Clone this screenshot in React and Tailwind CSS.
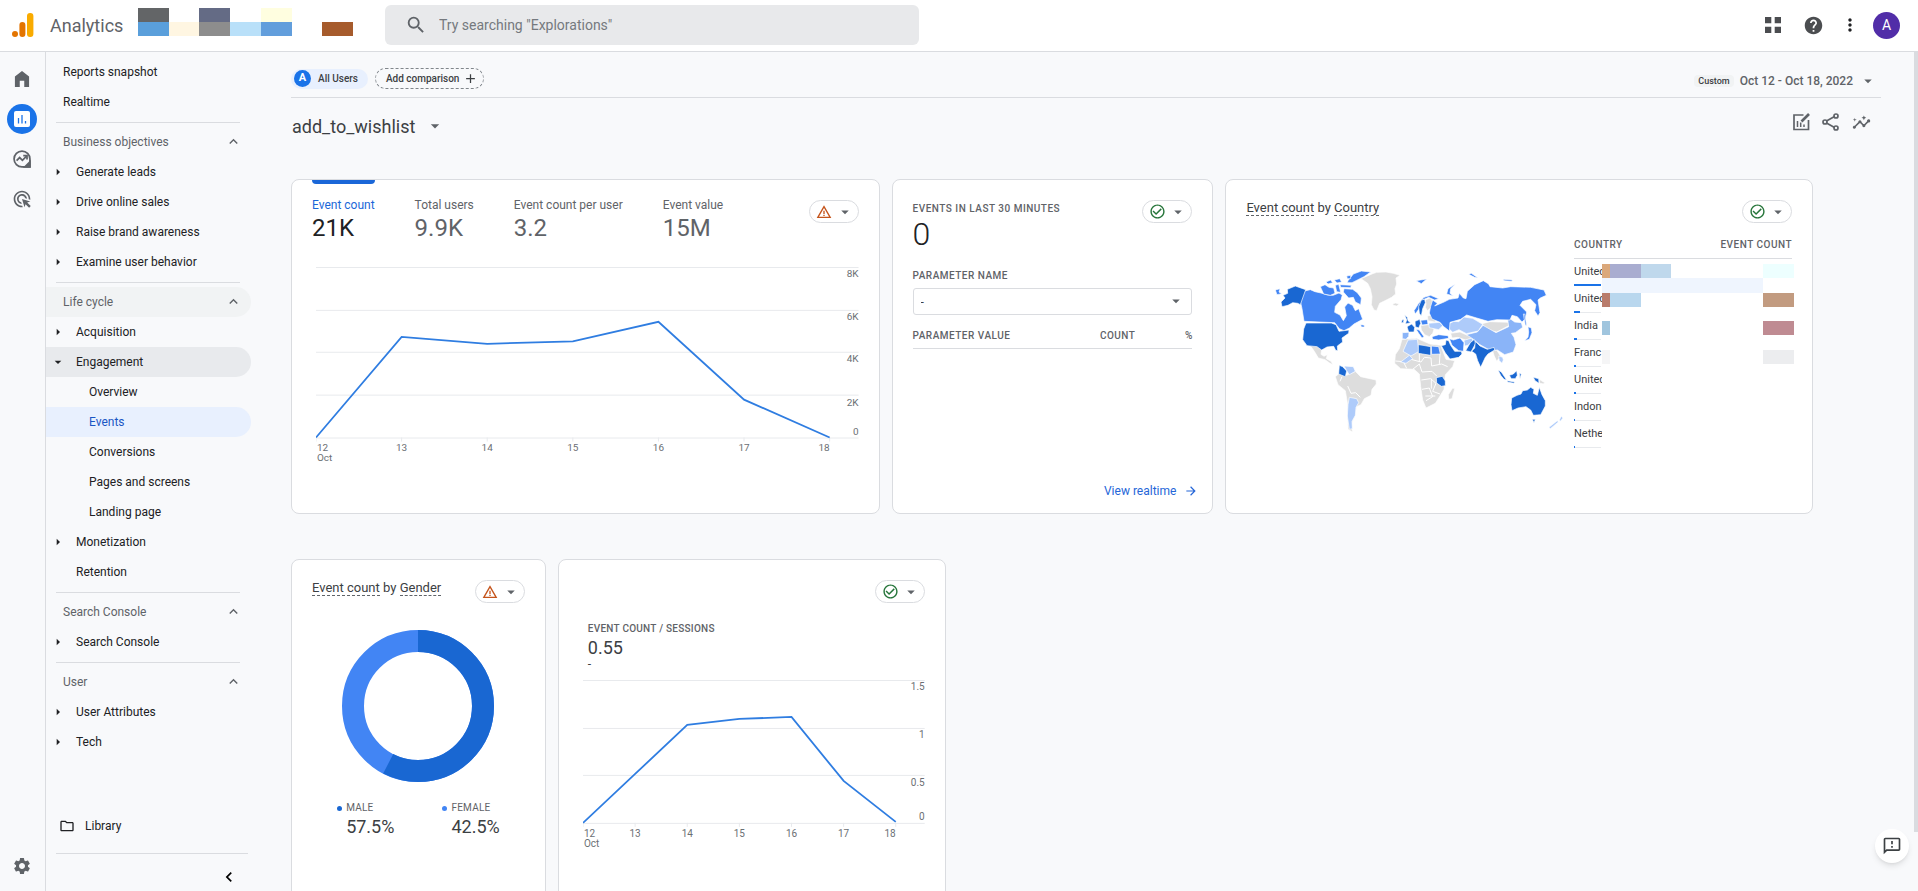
import React from 'react';
import {
  MdAdd,
  MdAdsClick,
  MdArrowDropDown,
  MdArrowForward,
  MdArrowRight,
  MdCheckCircleOutline,
  MdChevronLeft,
  MdExpandLess,
  MdHelp,
  MdInsights,
  MdMoreVert,
  MdOutlineFeedback,
  MdOutlineFolder,
  MdSearch,
  MdSettings,
  MdShare,
  MdWarningAmber,
} from 'react-icons/md';

const navSections = [
  {
    items: [
      { label: 'Reports snapshot', level: 0 },
      { label: 'Realtime', level: 0 },
    ],
  },
  {
    title: 'Business objectives',
    items: [
      { label: 'Generate leads', level: 1, arrow: 'right' },
      { label: 'Drive online sales', level: 1, arrow: 'right' },
      { label: 'Raise brand awareness', level: 1, arrow: 'right' },
      { label: 'Examine user behavior', level: 1, arrow: 'right' },
    ],
  },
  {
    title: 'Life cycle',
    highlighted: true,
    items: [
      { label: 'Acquisition', level: 1, arrow: 'right' },
      { label: 'Engagement', level: 1, arrow: 'down' },
      { label: 'Overview', level: 2 },
      { label: 'Events', level: 2, active: true },
      { label: 'Conversions', level: 2 },
      { label: 'Pages and screens', level: 2 },
      { label: 'Landing page', level: 2 },
      { label: 'Monetization', level: 1, arrow: 'right' },
      { label: 'Retention', level: 1 },
    ],
  },
  {
    title: 'Search Console',
    items: [{ label: 'Search Console', level: 1, arrow: 'right' }],
  },
  {
    title: 'User',
    items: [
      { label: 'User Attributes', level: 1, arrow: 'right' },
      { label: 'Tech', level: 1, arrow: 'right' },
    ],
  },
];

const metrics = [
  { label: 'Event count', value: '21K', active: true },
  { label: 'Total users', value: '9.9K' },
  { label: 'Event count per user', value: '3.2' },
  { label: 'Event value', value: '15M' },
];

const countries = [
  { name: 'United', bar: 'w-full' },
  { name: 'United', bar: 'w-[6px]' },
  { name: 'India', bar: 'w-[3px]' },
  { name: 'Franc', bar: 'w-[2px]' },
  { name: 'United', bar: 'w-[2px]' },
  { name: 'Indon', bar: 'w-px' },
  { name: 'Nethe', bar: 'w-px' },
];

// Redaction blocks shown next to the product name
const headerBlocks = [
  'bg-[#636567]', '', 'bg-[#646b85]', '', 'bg-[#fffee0]', '', '',
  'bg-[#5a9fdb]', 'bg-[#fff6e2]', 'bg-[#8d8d8d]', 'bg-[#b9e0f9]', 'bg-[#629edc]', '', 'bg-[#a65b2c]',
];

// Redaction blocks over the country table, one row per band
const tableBlocks = [
  { height: 'h-[14px]', cells: ['bg-[#dba87a]', 'bg-[#a9add0]', 'bg-[#bfd8ec]', '', 'bg-[#edffff]'] },
  { height: 'h-[15px]', cells: ['bg-[#eff5fe]', 'bg-[#eff5fe]', 'bg-[#eff5fe]', 'bg-[#eff5fe]', ''] },
  { height: 'h-[14px]', cells: ['bg-[#b97c6c]', 'bg-[#b9d7ee]', '', '', 'bg-[#c29b80]'] },
  { height: 'h-[14px]', cells: ['', '', '', '', ''] },
  { height: 'h-[14px]', cells: ['bg-[#a0c5de]', '', '', '', 'bg-[#bf8b92]'] },
  { height: 'h-[15px]', cells: ['', '', '', '', ''] },
  { height: 'h-[14px]', cells: ['bg-[#f5f5f6]', '', '', '', 'bg-[#ecedef]'] },
  { height: 'h-[76px]', cells: ['', '', '', '', ''] },
];

const levelPadding = ['pl-[17px]', 'pl-[30px]', 'pl-[43px]'];

const AnalyticsLogo = () => (
  <svg viewBox="0 0 22 25" className="h-[25px] w-[22px]" aria-hidden="true">
    <rect x="15" y="0" width="6.4" height="24" rx="3" fill="#f9ab00" />
    <rect x="7.4" y="9" width="6" height="15" rx="3" fill="#e37400" />
    <circle cx="3" cy="21" r="3" fill="#e37400" />
  </svg>
);

const HomeIcon = () => (
  <svg viewBox="0 0 24 24" className="size-5" fill="currentColor">
    <path d="M12 2.5 3.5 9v12.5H9.3V14h5.4v7.5h5.8V9z" />
  </svg>
);

const ReportsIcon = () => (
  <svg viewBox="0 0 16 16" className="size-4">
    <rect width="16" height="16" rx="2" fill="#fff" />
    <path d="M4.5 7v5.5M8 4v8.5M11.5 10v2.5" stroke="#1a73e8" strokeWidth="1.3" />
  </svg>
);

const ExploreIcon = () => (
  <svg viewBox="0 0 24 24" className="size-5" fill="none" stroke="currentColor" strokeWidth="2.1">
    <path d="M21.5 12A9.5 9.5 0 1 0 12 21.500M21.500 12V21.500H12" />
    <path d="M21.500 15.500V21.500H15.500z" fill="currentColor" />
    <path d="m5.500 14 3.700-3.700 3.300 3.300 5-5" />
    <path d="M13.500 8h4.500v4.500" />
  </svg>
);

const AppsIcon = () => (
  <svg viewBox="0 0 16 16" className="size-4" fill="currentColor">
    <path d="M0 0h6.300v6.300H0zM9.700 0H16v6.300H9.700zM0 9.700h6.300V16H0zM9.700 9.700H16V16H9.700z" />
  </svg>
);

const CustomizeIcon = () => (
  <svg viewBox="0 0 18 18" className="size-[18px]" fill="none" stroke="currentColor" strokeWidth="1.700">
    <path d="M11.500 2H2v14.500h14.500V7" />
    <path d="M5.500 8v6M8.700 9.500V14M12 11.500V14" strokeWidth="1.500" />
    <path d="m9.500 8.500 7.500-7.500" strokeWidth="2.600" />
  </svg>
);

const ShareIcon = () => (
  <svg viewBox="0 0 18 18" className="size-[18px]" fill="none" stroke="currentColor" strokeWidth="1.7">
    <path d="M4.500 8 12.500 3.500M4.500 10l8 4.500" />
    <circle cx="14" cy="3" r="2" />
    <circle cx="3" cy="9" r="2" />
    <circle cx="14" cy="15" r="2" />
  </svg>
);

const StatusPill = ({ warning }) => (
  <button
    type="button"
    aria-label={warning ? 'Data quality warning' : 'Data quality good'}
    className="flex h-[23px] w-[50px] shrink-0 items-center justify-between rounded-full border border-[#dadce0] bg-white pr-1 pl-[6px]"
  >
    {warning ? (
      <MdWarningAmber className="size-4 text-[#c5541b]" />
    ) : (
      <MdCheckCircleOutline className="size-[17px] text-[#26753a]" />
    )}
    <MdArrowDropDown className="size-[18px] text-[#5f6368]" />
  </button>
);

const Card = ({ className = '', children }) => (
  <section className={`flex flex-col rounded-lg border border-[#dadce0] bg-white px-5 pt-5 ${className}`}>
    {children}
  </section>
);

const CardTitle = ({ by }) => (
  <h2 className="text-[13px] leading-4 text-[#3c4043]">
    <span className="border-b border-dashed border-[#5f6368]">Event count</span> by{' '}
    <span className="border-b border-dashed border-[#5f6368]">{by}</span>
  </h2>
);

const LineChart = ({ width, height, plotWidth, points, grid, yLabels, label }) => {
  const base = grid[grid.length - 1];
  const step = plotWidth / 6;
  return (
    <svg viewBox={`0 0 ${width} ${height}`} className="block w-full" role="img" aria-label={label}>
      {grid.map((y) => (
        <line key={y} x1="0" x2={width} y1={y + 0.5} y2={y + 0.5} stroke="#e8eaed" />
      ))}
      {points.map((_, i) => (
        <line key={i} x1={i * step} x2={i * step} y1={base} y2={base + 4} stroke="#e8eaed" />
      ))}
      <polyline
        points={points.map((y, i) => `${i * step},${y}`).join(' ')}
        fill="none"
        stroke="#2f7de1"
        strokeWidth="1.8"
      />
      <g fontSize="10" fill="#6b6f74">
        {yLabels.map(({ text, y }) => (
          <text key={text} x={width} y={y} textAnchor="end">{text}</text>
        ))}
        <text x="1" y={base + 14}>12</text>
        <text x="1" y={base + 24}>Oct</text>
        {[13, 14, 15, 16, 17].map((day, i) => (
          <text key={day} x={(i + 1) * step} y={base + 14} textAnchor="middle">{day}</text>
        ))}
        <text x={plotWidth} y={base + 14} textAnchor="end">18</text>
      </g>
    </svg>
  );
};

const WorldMap = () => (
  <svg viewBox="0 0 912 510" className="w-[304px] shrink" role="img" aria-label="Event count by country map">
    <g transform="translate(-140 -290)" stroke="#fff" strokeWidth="2" strokeLinejoin="round">
      {/* No data */}
      <g fill="#dddddd">
        <path d="M425 328l35-15 12-4 28-1 22 4 20 6-12 8 2 18-5 14 2 16-12 10-16 8-20 10-9 22-8-2-8-16 2-24-5-24-8-16z" />
        <path d="M520 404l8-3 12 3-8 6-10-2z" />
        <path d="M270 525l28 2 9 14-2 14 9 6 10-5-3 12 14 8 6 10-10-5-14-10-20-5-12-20z" />
        <path d="M348 622l12-10 22 6 26-12 16 16 46 10 1 12-13 16-3 18-20 10-10 18-13 6-6 30-11 26 5 20-14-8-2-80-6-36-22-18z" />
        <path d="M548 510l44-3 40 17 32 4 16 42 26 4-6 18-22 24-4 44-12 20-14 22-28 14-10-24-6-40-4-38-16-14-40-2-18-16 2-26 12-18z" />
        <path d="M700 656l6 2-8 30-10 2-1-14z" />
        <path d="M618 392l14-6 8 10-4 18-12 10-6-10 2-10z" />
        <path d="M604 468l24-2 16 14-4 12-10 10-14-6-10-14z" />
        <path d="M624 440l20-4 12 12-10 10-20-4z" />
        <path d="M694 492l28-4 22 10 16-2 4 10-26 6-22-8-18 2z" />
        <path d="M788 463l24-6 56 2 4 8-40 21-30-7z" />
        <path d="M820 545l12-3 10 16 10 12-4 10-10-12-6 8-8-18z" />
        <path d="M960 630l16 10-4 4-12-3z" />
      </g>
      <path
        d="M575 570l30 8 10-14 20 2 2 24 30-6 18 8M580 600l20-16 8 24 30-2 14 14M606 632l28-4 16 14-10 24 22 8M608 660l22-4 10 26-20 12M528 575l24 2 10 20M600 552v26M662 554l-2 30M385 650l10 22 14-2 14 14M368 622l-6 14M618 680h30M636 628v30"
        fill="none"
        strokeWidth="3"
      />

      {/* Lowest range */}
      <g fill="#aecbfa">
        <path d="M374 590l28 2 6 14-18 10-8-12z" />
        <path d="M390 684l22 4 6 12-8 14-2 24-10 18 1 22-9 2-6-40 2-34z" />
        <path d="M566 512l28-2 5 36-24 14-24-14z" />
        <path d="M544 578l26-20 10 10-20 14z" />
        <path d="M684 465l20-9 14 1 16-14 26 4 30 18-13 20-36 8-22-12-19 8-12-12z" />
        <path d="M628 462l32-3 10 10-12 12-28-6z" />
        <path d="M734 513l24-7 2 8-14 14-10 2z" />
        <path d="M838 560l12 4 2 8-4 10-8-8z" />
        <path d="M1026 741l5 5-8 10-3-4zM1014 754l3 4-24 20-4-4z" />
      </g>

      {/* Low range */}
      <g fill="#8ab4f8">
        <path d="M741 496l33-8 17-20 39 22 38-18-4-30 22 16 20 2 4 14-22 16-12 2 8 12 6 22-8 22-26 8-22-14-20 2-34-19-20-17z" />
        <path d="M549 490l20-1-1 12-8 9-11-2z" />
      </g>

      {/* Middle range */}
      <g fill="#4285f4">
        <path d="M259 364l14-3 14 6 18 4 20 6 16 1 18-7 10 6-4 14-17 20-2 18 16 8 10 17 9-15-5-26 10-12 14 7 8 16 10-6 12 32-26 14-14 12-16 8-14-6-14-18-92-4-6-38-8-36z" />
        <path d="M386 334l16-20 24-9 28 3-20 14-24 12-12 6-14 0z" />
        <path d="M374 358l26 2 14 10 12 16-2 20-16-8-6-14-14 2-16-18z" />
        <path d="M303 352l14-6 12 8 14 2 4 16-14 6-20-4z" />
        <path d="M320 338l14-6 6 8-14 4zM345 332l16-4 6 10-14 3zM348 348l10-3 6 24-12-2zM362 346l34 2-2 7-30-1zM382 320l12-2 0 10-10 0zM424 466l10 1 2 6-10 0z" />
        <path d="M168 362l14-4-3 10 8 5-14 3z" />
        <path d="M640 392l14 10-8 8 28-12 16-8 26-4 4-14 12 14 8 2 4-22 22-20 26-12 16 10 4 8 38 4 24-4 60 2 40 8 7 16-18 8-7 6 6 38-6 10-10-16 4-18-16-16-24 6-8 12 20 20-4 20-10 10-14-16-16-4-6 14-40-1-26 5-34-10-30-9-18 13-32 9-2 26-18-14-10-12-24-10-8-18 4-20z" />
        <path d="M682 374l4-16 22-14-14 14-2 14 10 8zM748 315l8-3 20 14-10-2zM852 330l28 2-4 4-22-2zM590 334l32-5-16 14zM912 434l4 0 6 34-4 0z" />
        <path d="M584 424l14-22 16-18 20-6 24 10-12 4-18-8-18 8-12 28-10 14z" />
        <path d="M604 453l20-2 2 14-18 2zM590 480l10 2 14 20-6 4-10-14z" />
        <path d="M638 502l20-6 28 3 2 8-30 5-18-2z" />
        <path d="M636 530l22 2 5 22-26 1z" />
        <path d="M690 508l12 4 20-6 12 14-2 26-14-2-20-16z" />
        <path d="M926 472l10 4 2 14-8 20-14 4 10-10 2-16z" />
      </g>

      {/* Highest range */}
      <g fill="#1967d2">
        <path d="M228 350l31 11-16 45-8-4-15-2-14 8-18 4-3-14 12-12-6-8 14-6-1-12z" />
        <path d="M260 461h76l14 5 9 20 30-4-1 10-20 14 2 12-16 12 1 14-6-1-6-12-20 2-16 9-14-10-30-3-13-18 3-32z" />
        <path d="M360 588l10 4 12 13-4 17-20-8z" />
        <path d="M597 526l14 2 23 4v26l-24-4-13-2z" />
        <path d="M651 625l18-4 9 14 0 14-12 2-14-10z" />
        <path d="M680 512l8 2 6 14 12 18 20 0 2 8-10 10-26 5-14-18-12-22 12-3z" />
        <path d="M739 544l14-24 12-10 4 12-14 26z" />
        <path d="M768 516l14 14 22 10 20-6 2 8-20 12-8 10-14 30-9-20-6-20-12-8 9-10z" />
        <path d="M877 686l16-8 12-4 5-10 14-2 10-8 10 6-2 12 12 6 6-24 8 22 10 18 0 16-14 26-22 2-8-16-14-10-24 4-18 8-3-18zM939 750l9 0-4 10z" />
        <path d="M563 472l14-8 9 10-2 14-16 0z" />
        <path d="M587 456l14-6 3 12-6 14-10-4z" />
        <path d="M556 436l8 8 2 10 8 6-16 4 4-12zM548 452l6-2-2 10-6 0z" />
        <path d="M600 432l-2-20 8-20 10-2 2 10-8 18-4 22z" />
        <path d="M836 602l10 6 16 24-8-2-10-12zM870 618l12-4 10-10 2 14-6 10-12 0zM864 634l22 4-2 4-20-4zM900 612l6 2-4 14zM942 624l16 4 1 14-12-8z" />
      </g>
    </g>
  </svg>
);

const RAIL_BUTTON = 'flex size-[30px] items-center justify-center rounded-full text-[#5f6368]';

const Header = () => (
  <header className="flex h-[52px] shrink-0 items-center border-b border-[#dadce0] bg-white pr-[18px] pb-px pl-3">
    <a href="#home" className="flex w-[126px] items-center gap-4 text-[18px] text-[#5f6368]">
      <AnalyticsLogo />
      Analytics
    </a>
    <div className="grid w-[215px] grid-cols-7 grid-rows-2 pb-[6px]" aria-hidden="true">
      {headerBlocks.map((color, i) => (
        <span key={i} className={`h-[14px] ${color}`} />
      ))}
    </div>
    <div className="ml-8 flex h-10 w-[534px] items-center gap-3 rounded-md bg-[#e8e9eb] pl-5">
      <MdSearch className="size-[22px] shrink-0 text-[#5f6368]" />
      <input
        type="search"
        aria-label="Search"
        placeholder={'Try searching "Explorations"'}
        className="w-full bg-transparent text-[14px] outline-none placeholder:text-[#75797e]"
      />
    </div>
    <div className="ml-auto flex items-center text-[#4b4d50]">
      <button type="button" aria-label="Apps" className="mr-[22px]"><AppsIcon /></button>
      <button type="button" aria-label="Help" className="mr-4"><MdHelp className="size-[21px]" /></button>
      <button type="button" aria-label="More options" className="mr-[13px]"><MdMoreVert className="size-5 text-[#202124]" /></button>
      <button
        type="button"
        aria-label="Account"
        className="flex size-[27px] items-center justify-center rounded-full bg-[#512da8] text-[14px] text-white"
      >
        A
      </button>
    </div>
  </header>
);

const Rail = () => (
  <nav aria-label="Main" className="flex w-[46px] shrink-0 flex-col items-center gap-[10px] border-r border-[#dadce0] pt-3 pr-px pb-[10px]">
    <a href="#home" aria-label="Home" className={RAIL_BUTTON}><HomeIcon /></a>
    <a href="#reports" aria-label="Reports" className="flex size-[30px] items-center justify-center rounded-full bg-[#1a73e8]">
      <ReportsIcon />
    </a>
    <a href="#explore" aria-label="Explore" className={RAIL_BUTTON}><ExploreIcon /></a>
    <a href="#advertising" aria-label="Advertising" className={RAIL_BUTTON}><MdAdsClick className="size-5" /></a>
    <a href="#admin" aria-label="Admin" className={`${RAIL_BUTTON} mt-auto`}><MdSettings className="size-5" /></a>
  </nav>
);

const NavItem = ({ item }) => {
  let tone = 'text-[#202124]';
  if (item.active) tone = 'bg-[#e8f0fe] text-[#1a56c4]';
  if (item.arrow === 'down') tone = 'bg-[#e8eaed] text-[#202124]';

  return (
    <a href="#report" className={`flex h-[30px] items-center rounded-r-full pb-px text-[12px] ${tone}`}>
      {item.arrow ? (
        <span className="flex w-[30px] shrink-0 pl-1">
          {item.arrow === 'right' ? <MdArrowRight className="size-4" /> : <MdArrowDropDown className="size-4" />}
        </span>
      ) : null}
      <span className={item.arrow ? '' : levelPadding[item.level]}>{item.label}</span>
    </a>
  );
};

const Sidebar = () => (
  <aside className="flex w-[205px] shrink-0 flex-col pt-[5px]">
    {navSections.map((section, i) => (
      <div key={i}>
        {i > 0 && <hr className="mt-[5px] mr-[11px] mb-1 ml-[10px] border-[#dadce0]" />}
        {section.title && (
          <button
            type="button"
            className={`flex h-[30px] w-full items-center justify-between rounded-r-full pr-[9px] pb-px pl-[17px] text-[12px] text-[#5f6368] ${
              section.highlighted ? 'bg-[#f1f3f4]' : ''
            }`}
          >
            {section.title}
            <MdExpandLess className="size-[17px]" />
          </button>
        )}
        {section.items.map((item) => (
          <NavItem key={item.label} item={item} />
        ))}
      </div>
    ))}
    <a href="#library" className="mt-auto flex h-[30px] items-center gap-[10px] pl-[13px] text-[12px] text-[#202124]">
      <MdOutlineFolder className="size-4" />
      Library
    </a>
    <div className="mt-3 mr-[3px] ml-[10px] flex h-[38px] items-center justify-end border-t border-[#dadce0] pt-2 pr-[9px]">
      <button type="button" aria-label="Collapse navigation">
        <MdChevronLeft className="size-5" />
      </button>
    </div>
  </aside>
);

const OverviewCard = () => (
  <Card className="h-[335px]">
    <div className="flex items-start justify-between">
      <div className="-mt-5 flex gap-10">
        {metrics.map((metric) => (
          <button key={metric.label} type="button" className="flex flex-col text-left">
            <span className={`h-1 w-full rounded-b-sm ${metric.active ? 'bg-[#1a67d8]' : ''}`} />
            <span className={`mt-[13px] text-[12px] leading-4 ${metric.active ? 'text-[#1a67d8]' : 'text-[#5f6368]'}`}>
              {metric.label}
            </span>
            <span className={`text-[24px] leading-[30px] ${metric.active ? 'text-[#202124]' : 'text-[#5f6368]'}`}>
              {metric.value}
            </span>
          </button>
        ))}
      </div>
      <StatusPill warning />
    </div>
    <div className="mt-[23px] pl-1">
      <LineChart
        width={544}
        height={200}
        plotWidth={515}
        points={[172, 71, 78, 75.5, 56, 134, 172]}
        grid={[1, 44, 86, 129, 172]}
        yLabels={[
          { text: '8K', y: 11 },
          { text: '6K', y: 54 },
          { text: '4K', y: 96 },
          { text: '2K', y: 140 },
          { text: '0', y: 169 },
        ]}
        label="Event count by day"
      />
    </div>
  </Card>
);

const RealtimeCard = () => (
  <Card className="h-[335px]">
    <div className="flex items-start justify-between">
      <div>
        <h2 className="pt-px text-[10px] leading-4 font-medium tracking-wider text-[#5f6368]">EVENTS IN LAST 30 MINUTES</h2>
        <p className="text-[32px] leading-[34px] font-light text-[#202124]">0</p>
      </div>
      <StatusPill />
    </div>
    <label htmlFor="parameter" className="mt-[17px] text-[10px] leading-4 font-medium tracking-wider text-[#5f6368]">
      PARAMETER NAME
    </label>
    <div className="relative mt-1">
      <select
        id="parameter"
        className="h-[27px] w-full appearance-none rounded-[3px] border border-[#dadce0] bg-white pl-[7px] text-[12px] text-[#3c4043]"
      >
        <option>-</option>
      </select>
      <MdArrowDropDown className="pointer-events-none absolute top-1 right-[7px] size-[18px] text-[#5f6368]" />
    </div>
    <table className="mt-[13px] w-full text-[10px] leading-4 text-[#5f6368]">
      <thead>
        <tr className="border-b border-[#dadce0]">
          <th className="pb-1 text-left font-medium tracking-wider">PARAMETER VALUE</th>
          <th className="pb-1 text-right font-medium tracking-wider">COUNT</th>
          <th className="w-[57px] pb-1 text-right font-medium">%</th>
        </tr>
      </thead>
    </table>
    <a href="#realtime" className="mt-auto -mr-[6px] mb-[13px] flex items-center gap-2 self-end text-[12px] text-[#2566d8]">
      View realtime
      <MdArrowForward className="size-[14px]" />
    </a>
  </Card>
);

const CountryCard = () => (
  <Card className="h-[335px]">
    <div className="flex items-start justify-between">
      <CardTitle by="Country" />
      <StatusPill />
    </div>
    <div className="mt-[14px] flex justify-between pl-5">
      <div className="mt-[29px] min-w-0">
        <WorldMap />
      </div>
      <div className="relative w-[218px] shrink-0">
        <table className="w-full text-[#3c4043]">
          <thead>
            <tr className="border-b border-[#dadce0] text-[10px] leading-4 text-[#5f6368]">
              <th className="pb-[5px] text-left font-medium tracking-wider">COUNTRY</th>
              <th className="pb-[5px] text-right font-medium tracking-wider">EVENT COUNT</th>
            </tr>
          </thead>
          <tbody>
            {countries.map((country, i) => (
              <tr key={i} className="h-[27px] align-bottom">
                <td colSpan={2}>
                  <div className="text-[11px] leading-4">{country.name}</div>
                  <div className="mt-1 h-[2px] w-[27px] border-b border-[#e8eaed]">
                    <div className={`h-[2px] bg-[#1a73e8] ${country.bar}`} />
                  </div>
                </td>
              </tr>
            ))}
          </tbody>
        </table>
        {/* Redacted values over the table */}
        <div className="absolute top-[27px] -right-[2px] flex w-[192px] flex-col bg-white" aria-hidden="true">
          {tableBlocks.map((row, i) => (
            <div key={i} className={`grid grid-cols-[8px_31px_30px_92px_31px] ${row.height}`}>
              {row.cells.map((color, j) => (
                <span key={j} className={color} />
              ))}
            </div>
          ))}
        </div>
      </div>
    </div>
  </Card>
);

const DONUT_RADIUS = 65;
const CIRCUMFERENCE = 2 * Math.PI * DONUT_RADIUS;

const GenderCard = () => (
  <Card className="h-[360px]">
    <div className="flex items-start justify-between">
      <CardTitle by="Gender" />
      <StatusPill warning />
    </div>
    <svg viewBox="0 0 152 152" className="mx-auto mt-[27px] size-[152px]" role="img" aria-label="Event count by gender">
      <circle cx="76" cy="76" r={DONUT_RADIUS} fill="none" stroke="#4285f4" strokeWidth="22" />
      <circle
        cx="76"
        cy="76"
        r={DONUT_RADIUS}
        fill="none"
        stroke="#1967d2"
        strokeWidth="22"
        strokeDasharray={`${CIRCUMFERENCE * 0.575} ${CIRCUMFERENCE}`}
        transform="rotate(-90 76 76)"
      />
    </svg>
    <div className="mt-[18px] flex justify-center gap-12">
      {[
        { label: 'MALE', value: '57.5%', dot: 'bg-[#1967d2]' },
        { label: 'FEMALE', value: '42.5%', dot: 'bg-[#4285f4]' },
      ].map(({ label, value, dot }) => (
        <div key={label} className="grid grid-cols-[9px_auto] items-center">
          <span className={`size-[5px] rounded-full ${dot}`} />
          <span className="text-[10px] leading-4 tracking-wide text-[#5f6368]">{label}</span>
          <span className="col-start-2 text-[18px] leading-[22px] text-[#3c4043]">{value}</span>
        </div>
      ))}
    </div>
  </Card>
);

const SessionsCard = () => (
  <Card className="h-[360px]">
    <div className="flex justify-end">
      <StatusPill />
    </div>
    <div className="mt-[18px] pl-[9px]">
      <h2 className="text-[10px] leading-4 font-medium tracking-wide text-[#5f6368]">EVENT COUNT / SESSIONS</h2>
      <p className="text-[18px] leading-[22px] text-[#3c4043]">0.55</p>
      <p className="text-[12px] leading-[10px] text-[#3c4043]">-</p>
    </div>
    <div className="mt-[10px] pl-1">
      <LineChart
        width={342}
        height={170}
        plotWidth={313}
        points={[144, 95, 46, 40, 38, 102, 143]}
        grid={[1, 49, 96, 144]}
        yLabels={[
          { text: '1.5', y: 11 },
          { text: '1', y: 59 },
          { text: '0.5', y: 107 },
          { text: '0', y: 141 },
        ]}
        label="Event count per session by day"
      />
    </div>
  </Card>
);

const App = () => (
  <div className="flex h-screen flex-col overflow-hidden bg-[#f8f9fb] font-['Roboto',sans-serif]">
    <Header />
    <div className="flex min-h-0 flex-1">
      <Rail />
      <Sidebar />
      <main className="min-w-0 flex-1 overflow-hidden pl-10">
        <div className="mr-[33px] flex h-[46px] items-center justify-between border-b border-[#dadce0] pt-2">
          <div className="flex items-center gap-[7px]">
            <button type="button" className="flex h-5 items-center gap-[7px] rounded-full bg-[#e8f0fe] pr-[10px] pl-[3px] text-[10px] font-medium text-[#3c4043]">
              <span className="flex size-[17px] items-center justify-center rounded-full bg-[#1a73e8] text-[11px] font-bold text-white">A</span>
              All Users
            </button>
            <button
              type="button"
              className="flex h-[21px] items-center gap-1 rounded-full border border-dashed border-[#80868b] pr-[5px] pl-[10px] text-[10px] font-medium text-[#3c4043]"
            >
              Add comparison
              <MdAdd className="size-[15px]" />
            </button>
          </div>
          <button type="button" className="flex items-center gap-[6px] pt-1 pr-1 text-[12px] font-medium text-[#5f6368]">
            <span className="rounded bg-[#f1f3f4] px-1 text-[9px] leading-3 text-[#3c4043]">Custom</span>
            Oct 12 - Oct 18, 2022
            <MdArrowDropDown className="size-[18px]" />
          </button>
        </div>

        <div className="mr-[33px] flex h-14 items-center justify-between">
          <button type="button" className="flex items-center gap-[10px] pl-px text-[18px] text-[#3c4043]">
            add_to_wishlist
            <MdArrowDropDown className="size-5 text-[#5f6368]" />
          </button>
          <div className="flex items-center gap-3 pr-[10px] pb-2 text-[#5f6368]">
            <button type="button" aria-label="Customize report"><CustomizeIcon /></button>
            <button type="button" aria-label="Share this report"><ShareIcon /></button>
            <button type="button" aria-label="Insights"><MdInsights className="size-[19px]" /></button>
          </div>
        </div>

        <div className="mt-[25px] mr-[101px] grid grid-cols-[589fr_322fr_588fr] gap-3">
          <OverviewCard />
          <RealtimeCard />
          <CountryCard />
        </div>
        <div className="mt-[45px] mr-[101px] grid grid-cols-[255fr_388fr_856fr] gap-3">
          <GenderCard />
          <SessionsCard />
        </div>
      </main>
      <div className="w-1 shrink-0" aria-hidden="true">
        <div className="h-[93%] bg-[#dadce0]" />
      </div>
    </div>
    <button
      type="button"
      aria-label="Send feedback"
      className="fixed right-[9px] bottom-7 flex size-[34px] items-center justify-center rounded-full bg-white text-[#3c4043] shadow-md"
    >
      <MdOutlineFeedback className="size-5" />
    </button>
  </div>
);

export default App;
